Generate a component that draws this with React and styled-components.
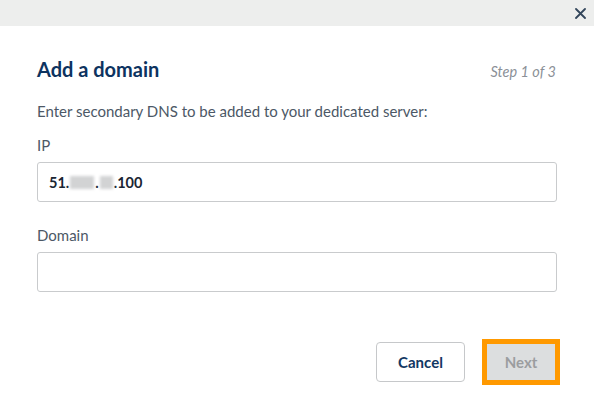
import React, { useState } from 'react';
import styled, { createGlobalStyle } from 'styled-components';

const GlobalStyle = createGlobalStyle`
  body {
    margin: 0;
    background: #ffffff;
    font-family: Lato, 'Open Sans', sans-serif;
  }
`;

const Modal = styled.div`
  width: 594px;
  height: 409px;
  display: flex;
  flex-direction: column;
  background: #ffffff;
  overflow: hidden;
`;

const Header = styled.div`
  height: 26px;
  background: #edeeed;
  display: flex;
  justify-content: flex-end;
  align-items: center;
  padding-right: 6px;
`;

const CloseButton = styled.button`
  width: 16px;
  height: 16px;
  padding: 0;
  border: none;
  background: transparent;
  display: flex;
  align-items: center;
  justify-content: center;
  cursor: pointer;
`;

const Body = styled.div`
  padding: 31px 37px 0 37px;
  display: flex;
  flex-direction: column;
`;

const TitleRow = styled.div`
  display: flex;
  justify-content: space-between;
  align-items: baseline;
`;

const Title = styled.h2`
  margin: 0;
  font-size: 20px;
  line-height: 24px;
  font-weight: 700;
  color: #0d3360;
`;

const Step = styled.span`
  font-size: 14.5px;
  font-style: italic;
  color: #8b9097;
  margin-right: 1px;
`;

const Description = styled.p`
  margin: 20px 0 0 0;
  font-size: 15px;
  line-height: 20px;
  color: #4c5866;
`;

const Field = styled.div`
  margin-top: ${({ $gap }) => $gap}px;
  display: flex;
  flex-direction: column;
`;

const Label = styled.label`
  font-size: 15px;
  line-height: 20px;
  color: #4c5866;
  margin-bottom: 7px;
`;

const InputBox = styled.div`
  height: 40px;
  box-sizing: border-box;
  border: 1px solid #c9cbcd;
  border-radius: 3px;
  padding: 0 11px;
  display: flex;
  align-items: center;
  font-size: 14.5px;
  font-weight: 700;
  color: #1a2633;
`;

const Masked = styled.span`
  display: inline-block;
  width: ${({ $w }) => $w}px;
  height: 13px;
  background: #d2d3d4;
  filter: blur(1.5px);
  margin: 0 1px;
`;

const Footer = styled.div`
  margin-top: 47px;
  display: flex;
  justify-content: flex-end;
  align-items: center;
  gap: 17px;
  padding-right: 34px;
`;

const CancelButton = styled.button`
  width: 89px;
  height: 40px;
  box-sizing: border-box;
  background: #ffffff;
  border: 1px solid #c6c8ca;
  border-radius: 4px;
  font-family: inherit;
  font-size: 15px;
  font-weight: 700;
  color: #123763;
  cursor: pointer;
`;

const NextButton = styled.button`
  width: 78px;
  height: 46px;
  box-sizing: border-box;
  background: #dcdedf;
  border: 5px solid #ff9900;
  border-radius: 0;
  font-family: inherit;
  font-size: 15px;
  font-weight: 700;
  color: #9b9d9f;
  cursor: not-allowed;
`;

function CloseIcon() {
  return (
    <svg width="11" height="11" viewBox="0 0 11 11">
      <path d="M1 1 L10 10 M10 1 L1 10" stroke="#33465b" strokeWidth="1.8" strokeLinecap="round" />
    </svg>
  );
}

export default function App() {
  const [domain] = useState('');

  return (
    <>
      <GlobalStyle />
      <Modal>
        <Header>
          <CloseButton aria-label="Close">
            <CloseIcon />
          </CloseButton>
        </Header>
        <Body>
          <TitleRow>
            <Title>Add a domain</Title>
            <Step>Step 1 of 3</Step>
          </TitleRow>
          <Description>Enter secondary DNS to be added to your dedicated server:</Description>
          <Field $gap={14}>
            <Label>IP</Label>
            <InputBox>
              51.<Masked $w={24} />.<Masked $w={13} />.100
            </InputBox>
          </Field>
          <Field $gap={23}>
            <Label>Domain</Label>
            <InputBox>{domain}</InputBox>
          </Field>
        </Body>
        <Footer>
          <CancelButton>Cancel</CancelButton>
          <NextButton disabled>Next</NextButton>
        </Footer>
      </Modal>
    </>
  );
}
